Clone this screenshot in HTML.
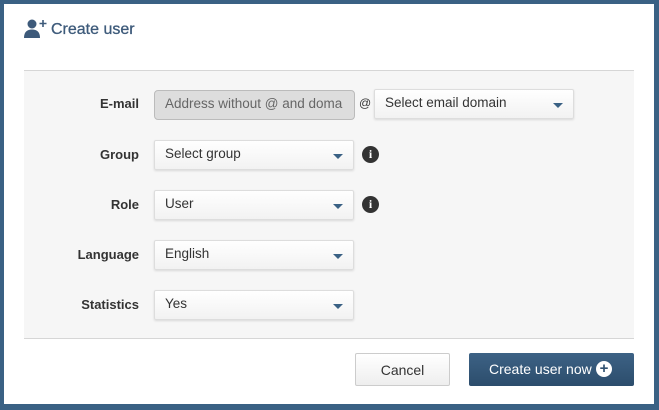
<!DOCTYPE html>
<html><head><style>
*{box-sizing:border-box;margin:0;padding:0}
body{width:659px;height:410px;background:#3a6184;position:relative;font-family:"Liberation Sans",sans-serif;overflow:hidden}
.card{position:absolute;left:4px;top:4px;width:650px;height:400px;background:#fff}
.t{position:absolute;left:51px;top:21px;font-size:16px;color:#3d5a7a;-webkit-text-stroke:0.3px #3d5a7a}
.panel{position:absolute;left:24px;top:70px;width:610px;height:269px;background:#f6f6f6;border-top:1px solid #d6d6d6;border-bottom:1px solid #d6d6d6}
.lb{position:absolute;width:116px;text-align:right;left:23px;font-size:13px;font-weight:bold;color:#333}
.sel{position:absolute;height:30px;border:1px solid #ddd;border-radius:2px;background:linear-gradient(#fff,#f2f2f2);box-shadow:0 1px 2px rgba(0,0,0,.12);font-size:13.5px;color:#333;padding:5px 10px}
.sel:after{content:"";position:absolute;right:10px;top:13px;border-left:5px solid transparent;border-right:5px solid transparent;border-top:5px solid #3a6184}
.inp{position:absolute;left:154px;top:90px;width:201px;height:30px;border:1px solid #bbb;border-radius:4px;background:#ddd;font-size:13.5px;color:#666;padding:5px 10px;white-space:nowrap;overflow:hidden}
.info{position:absolute;width:17px;height:17px;border-radius:50%;background:#333;color:#fff;font-size:12px;font-weight:bold;text-align:center;line-height:17px;font-family:"Liberation Serif",serif}
.btn{position:absolute;top:353px;height:33px;border-radius:2px;font-size:14px;line-height:32px}
</style></head><body>
<div class="card"></div>
<svg style="position:absolute;left:24px;top:19px" width="24" height="20" viewBox="0 0 24 20"><circle cx="8" cy="5" r="4.5" fill="#3d5a7a"/><path d="M0 19c0-6 3-8.5 8-8.5s8 2.5 8 8.5z" fill="#3d5a7a"/><path d="M19 1v7M15.5 4.5h7" stroke="#3d5a7a" stroke-width="1.6"/></svg>
<div class="t">Create user</div>
<div class="panel"></div>
<div class="lb" style="top:96px">E-mail</div>
<div class="inp">Address without @ and doma</div>
<div style="position:absolute;left:359px;top:96px;font-size:12px;color:#333">@</div>
<div class="sel" style="left:374px;top:89px;width:200px">Select email domain</div>
<div class="lb" style="top:147px">Group</div>
<div class="sel" style="left:154px;top:140px;width:200px">Select group</div>
<div class="info" style="left:362px;top:146px">i</div>
<div class="lb" style="top:197px">Role</div>
<div class="sel" style="left:154px;top:190px;width:200px">User</div>
<div class="info" style="left:362px;top:196px">i</div>
<div class="lb" style="top:247px">Language</div>
<div class="sel" style="left:154px;top:240px;width:200px">English</div>
<div class="lb" style="top:297px">Statistics</div>
<div class="sel" style="left:154px;top:290px;width:200px">Yes</div>
<div class="btn" style="left:355px;width:95px;border:1px solid #ccc;background:linear-gradient(#fff,#eee);color:#333;text-align:center">Cancel</div>
<div class="btn" style="left:469px;width:165px;background:linear-gradient(#3d6285,#2c4d6c);color:#fff;padding-left:20px">Create user now</div>
<div style="position:absolute;left:596px;top:361px;width:16px;height:16px;border-radius:50%;background:#fff;color:#2f5070;font-size:15px;font-weight:bold;line-height:16px;text-align:center">+</div>
</body></html>
